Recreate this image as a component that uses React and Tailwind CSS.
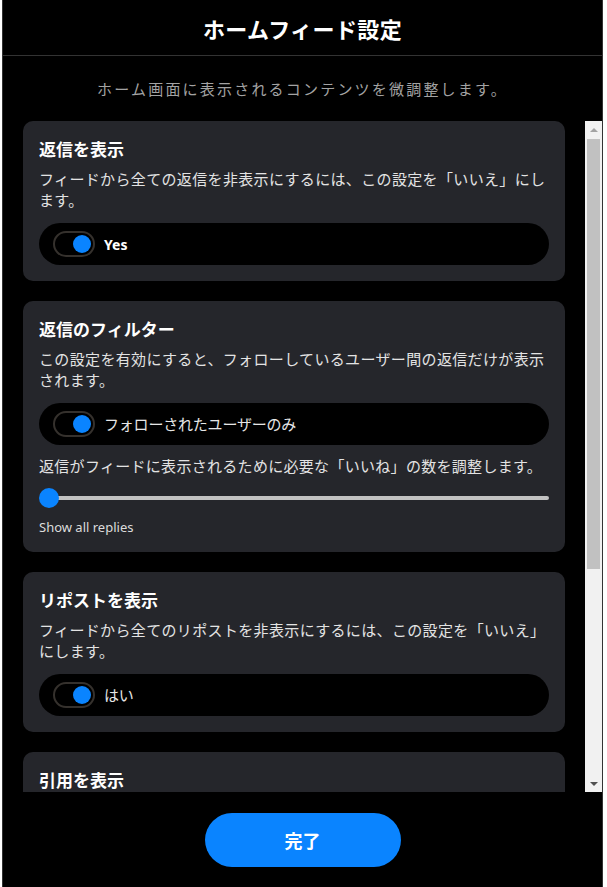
import { useState } from 'react';

const font = "font-['Noto_Sans_CJK_JP','Noto_Sans',sans-serif]";
const latin = "font-['Noto_Sans','Noto_Sans_CJK_JP',sans-serif]";

function Toggle({ label, bold }) {
  return (
    <div className="mt-[13px] h-[42px] rounded-full bg-black flex items-center pl-[14px] gap-[9px]">
      <div className="w-[42px] h-[26px] rounded-full border-2 border-[#35312d] flex items-center justify-end pr-[2px] shrink-0">
        <div className="w-[18px] h-[18px] rounded-full bg-[#0a84ff]" />
      </div>
      <span className={bold ? `${latin} text-[14px] font-bold text-white` : 'text-[15px] tracking-[-0.2px] text-[#e6e6e6]'}>{label}</span>
    </div>
  );
}

function Card({ title, lines, children }) {
  return (
    <div className="rounded-[10px] bg-[#25262b] pt-4 pb-4 px-4 shrink-0">
      <h2 className="text-[17px] leading-6 font-bold text-white">{title}</h2>
      <p className="mt-[7px] text-[15px] leading-[21px] tracking-[0.35px] text-[#e3e3e3] whitespace-nowrap">
        {lines[0]}
        <br />
        {lines[1]}
      </p>
      {children}
    </div>
  );
}

export default function App() {
  const [likes] = useState(0);

  return (
    <div className={`${font} h-[887px] bg-black ml-[2px] mr-[4px] border-x border-[#333] flex flex-col overflow-hidden`}>
      {/* header */}
      <div className="h-[56px] shrink-0 border-b border-[#333] flex items-center justify-center">
        <h1 className="text-[22px] leading-7 font-bold tracking-[0.4px] text-white">ホームフィード設定</h1>
      </div>
      <div className="h-[65px] shrink-0 flex items-center justify-center">
        <p className="text-[15px] leading-5 tracking-[2.2px] text-[#a3a3a3]">ホーム画面に表示されるコンテンツを微調整します。</p>
      </div>

      {/* scroll area */}
      <div className="h-[671px] shrink-0 flex">
        <div className="flex-1 overflow-hidden pl-5 pr-5 flex flex-col gap-5">
          <Card
            title="返信を表示"
            lines={['フィードから全ての返信を非表示にするには、この設定を「いいえ」にし', 'ます。']}
          >
            <Toggle label="Yes" bold />
          </Card>

          <Card
            title="返信のフィルター"
            lines={['この設定を有効にすると、フォローしているユーザー間の返信だけが表示', 'されます。']}
          >
            <Toggle label="フォローされたユーザーのみ" />
            <p className="mt-[10px] text-[15px] leading-[21px] tracking-[0.3px] text-[#e3e3e3] whitespace-nowrap">
              返信がフィードに表示されるために必要な「いいね」の数を調整します。
            </p>
            <div className="mt-3 h-5 relative flex items-center">
              <div className="h-[4px] ml-[10px] flex-1 rounded-full bg-[#c2c2c2]" />
              <div
                className="absolute top-0 w-5 h-5 rounded-full bg-[#0a84ff]"
                style={{ left: `${likes * 10}px` }}
              />
            </div>
            <p className={`${latin} mt-[10px] text-[13px] leading-[18px] text-[#dcdcdc]`}>Show all replies</p>
          </Card>

          <Card
            title="リポストを表示"
            lines={['フィードから全てのリポストを非表示にするには、この設定を「いいえ」', 'にします。']}
          >
            <Toggle label="はい" />
          </Card>

          <Card
            title="引用を表示"
            lines={['フィードから全ての引用を非表示にするには、この設定を「いいえ」にし', 'ます。']}
          >
            <Toggle label="はい" />
          </Card>
        </div>

        {/* scrollbar */}
        <div className="w-[17px] shrink-0 bg-[#f1f1f1] flex flex-col">
          <div className="h-[17px] flex items-center justify-center">
            <div className="w-0 h-0 border-x-[4px] border-x-transparent border-b-[4px] border-b-[#a3a3a3]" />
          </div>
          <div className="mx-[2px] mt-[1px] h-[430px] bg-[#c1c1c1]" />
          <div className="flex-1" />
          <div className="h-[17px] flex items-center justify-center">
            <div className="w-0 h-0 border-x-[4px] border-x-transparent border-t-[4px] border-t-[#505050]" />
          </div>
        </div>
      </div>

      {/* footer */}
      <div className="flex-1 flex justify-center pt-[21px]">
        <button className="w-[196px] h-[54px] rounded-full bg-[#0a84ff] text-white flex items-center justify-center">
          <span className="text-[18px] leading-6 font-bold">完了</span>
        </button>
      </div>
    </div>
  );
}
